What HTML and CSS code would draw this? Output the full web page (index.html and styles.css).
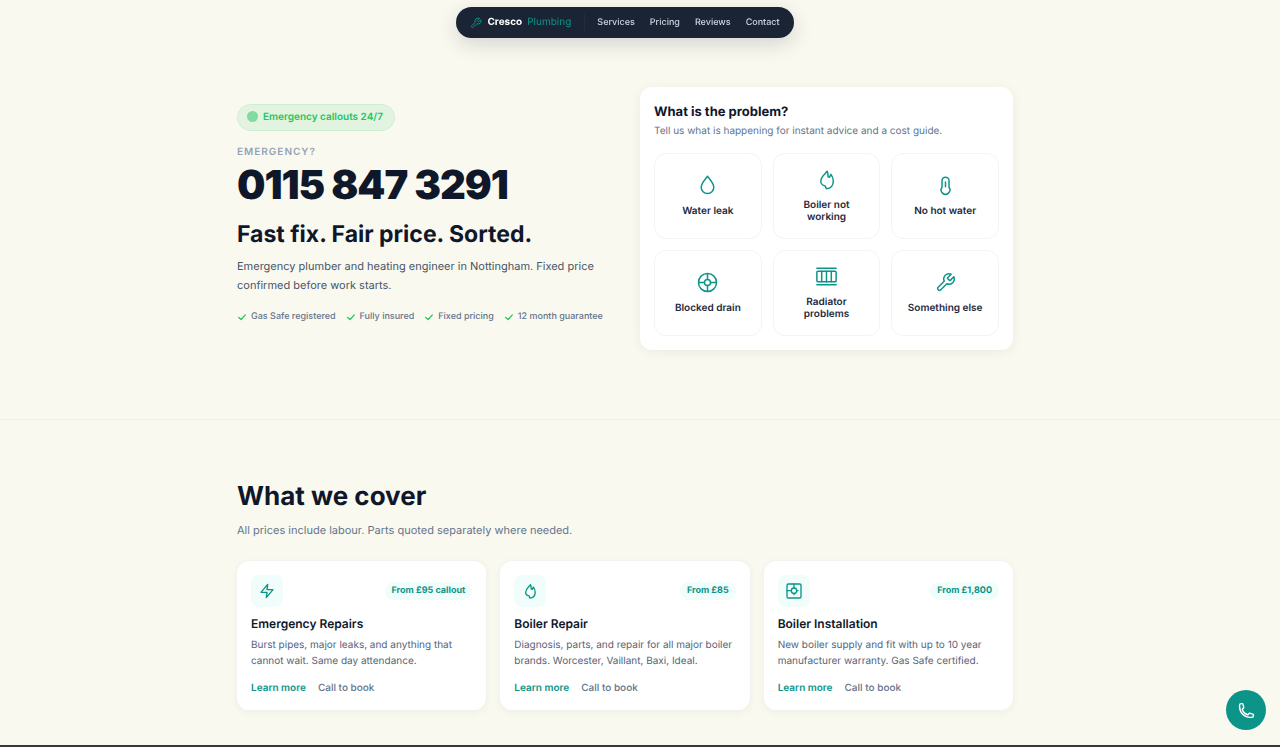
FILE: index.html
```
<!DOCTYPE html>
<html lang="en">
<head>
<meta charset="utf-8">
<meta name="viewport" content="width=device-width, initial-scale=1">
<title>Cresco Plumbing</title>
<link rel="stylesheet" href="styles.css">
</head>
<body>
<svg class="sprite" aria-hidden="true">
  <symbol id="wrench" viewBox="0 0 24 24"><path d="M14.7 6.3a1 1 0 0 0 0 1.4l1.6 1.6a1 1 0 0 0 1.4 0l3.77-3.77a6 6 0 0 1-7.94 7.94l-6.91 6.91a2.12 2.12 0 0 1-3-3l6.91-6.91a6 6 0 0 1 7.94-7.94z"/></symbol>
  <symbol id="check" viewBox="0 0 24 24"><path d="M20 7 10 18l-6-5"/></symbol>
  <symbol id="flame" viewBox="0 0 24 24"><path d="M12.800 2.500C10.500 6 5.500 8.500 5.500 14c0 2.500 2 5 5 5.300L11.800 22.500C17 22.500 19.800 18.800 19.800 13.800c0-3-1-5.400-2.700-7.700L15.300 9.500l-1.600-.8c.2-2-.1-4.200-.9-6.200z"/></symbol>
</svg>

<header class="header">
  <nav class="nav" aria-label="Main">
    <a class="brand" href="#top"><svg class="icon brand-icon"><use href="#wrench"/></svg><span class="brand-name">Cresco</span><span class="brand-sub">Plumbing</span></a>
    <ul class="nav-links">
      <li><a href="#services">Services</a></li>
      <li><a href="#pricing">Pricing</a></li>
      <li><a href="#reviews">Reviews</a></li>
      <li><a href="#contact">Contact</a></li>
    </ul>
  </nav>
</header>

<main id="top">
  <section class="hero">
    <div class="container hero-grid">
      <div class="intro">
        <p class="status"><span class="status-dot"></span>Emergency callouts 24/7</p>
        <p class="eyebrow">EMERGENCY?</p>
        <a class="phone" href="tel:01158473291">0115 847 3291</a>
        <h1 class="tagline">Fast fix. Fair price. Sorted.</h1>
        <p class="lead">Emergency plumber and heating engineer in Nottingham. Fixed price confirmed before work starts.</p>
        <ul class="trust">
          <li><svg class="icon check"><use href="#check"/></svg>Gas Safe registered</li>
          <li><svg class="icon check"><use href="#check"/></svg>Fully insured</li>
          <li><svg class="icon check"><use href="#check"/></svg>Fixed pricing</li>
          <li><svg class="icon check"><use href="#check"/></svg>12 month guarantee</li>
        </ul>
      </div>
      <div class="panel">
        <h2 class="panel-title">What is the problem?</h2>
        <p class="panel-text">Tell us what is happening for instant advice and a cost guide.</p>
        <div class="problems">
          <button class="problem" type="button"><svg class="icon problem-icon" viewBox="0 0 24 24"><path d="M12 1.500C9 5.500 4.800 9.500 4.800 14a7.200 7.200 0 0 0 14.400 0C19.200 9.500 15 5.500 12 1.500z"/></svg>Water leak</button>
          <button class="problem" type="button"><svg class="icon problem-icon"><use href="#flame"/></svg>Boiler not working</button>
          <button class="problem" type="button"><svg class="icon problem-icon" viewBox="0 0 24 24"><path d="M8 6.500a4 4 0 0 1 8 0V14a5 5 0 1 1-8 0z"/><path d="M12 8v5.500"/></svg>No hot water</button>
          <button class="problem" type="button"><svg class="icon problem-icon" viewBox="0 0 24 24"><circle cx="12" cy="12" r="10.300"/><circle cx="12" cy="12" r="3.500"/><path d="M12 2v6.500M12 15.500V22M2 12h6.500M15.500 12H22"/></svg>Blocked drain</button>
          <button class="problem" type="button"><svg class="icon problem-icon" viewBox="0 0 24 24"><path d="M1 2.500h22M1 21.500h22"/><rect x="1" y="6" width="22" height="12" rx="1"/><path d="M6.500 6v12M12 6v12M17.500 6v12"/></svg>Radiator problems</button>
          <button class="problem" type="button"><svg class="icon problem-icon"><use href="#wrench"/></svg>Something else</button>
        </div>
      </div>
    </div>
  </section>

  <section class="services" id="services">
    <div class="container">
      <h2 class="section-title">What we cover</h2>
      <p class="section-text">All prices include labour. Parts quoted separately where needed.</p>
      <div class="cards">
        <article class="card">
          <div class="card-top"><span class="tile"><svg class="icon tile-icon" viewBox="0 0 24 24"><path d="M13 2 3 14h9l-1 8 10-12h-9z"/></svg></span><span class="price">From £95 callout</span></div>
          <h3 class="card-title">Emergency Repairs</h3>
          <p class="card-text">Burst pipes, major leaks, and anything that cannot wait. Same day attendance.</p>
          <div class="card-links"><a class="more" href="#emergency">Learn more</a><a class="call" href="tel:01158473291">Call to book</a></div>
        </article>
        <article class="card">
          <div class="card-top"><span class="tile"><svg class="icon tile-icon"><use href="#flame"/></svg></span><span class="price">From £85</span></div>
          <h3 class="card-title">Boiler Repair</h3>
          <p class="card-text">Diagnosis, parts, and repair for all major boiler brands. Worcester, Vaillant, Baxi, Ideal.</p>
          <div class="card-links"><a class="more" href="#repair">Learn more</a><a class="call" href="tel:01158473291">Call to book</a></div>
        </article>
        <article class="card">
          <div class="card-top"><span class="tile"><svg class="icon tile-icon" viewBox="0 0 24 24"><rect x="1.500" y="1.500" width="21" height="21" rx="2"/><circle cx="12" cy="11.500" r="4"/><path d="M12 1.500v6M12 15.500v2M1.500 11.500H8M16 11.500h2"/></svg></span><span class="price">From £1,800</span></div>
          <h3 class="card-title">Boiler Installation</h3>
          <p class="card-text">New boiler supply and fit with up to 10 year manufacturer warranty. Gas Safe certified.</p>
          <div class="card-links"><a class="more" href="#installation">Learn more</a><a class="call" href="tel:01158473291">Call to book</a></div>
        </article>
      </div>
    </div>
  </section>
</main>
<footer class="footer"></footer>

<a class="fab" href="tel:01158473291" aria-label="Call us"><svg class="icon fab-icon" viewBox="0 0 24 24"><path d="M2.250 6.750c0 8.284 6.716 15 15 15h2.250a2.250 2.250 0 0 0 2.250-2.250v-1.372c0-.516-.351-.966-.852-1.091l-4.423-1.106c-.44-.11-.902.055-1.173.417l-.97 1.293c-.282.376-.769.542-1.210.380a12.035 12.035 0 0 1-7.143-7.143c-.162-.441.004-.928.380-1.210l1.293-.97c.363-.271.527-.734.417-1.173L6.963 3.102a1.125 1.125 0 0 0-1.091-.852H4.500A2.250 2.250 0 0 0 2.250 4.500v2.250z"/></svg></a>
</body>
</html>
```
FILE: styles.css
```
* { box-sizing: border-box; margin: 0; padding: 0; }

:root {
  --ink: #0f172a;
  --slate: #64748b;
  --teal: #0d9488;
  --gutter: 30px;
}

body {
  background: #faf9f0;
  color: var(--ink);
  font-family: Inter, "Liberation Sans", sans-serif;
  font-size: 12px;
  line-height: 16px;
  text-rendering: geometricPrecision;
}

a { color: inherit; text-decoration: none; }
ul { list-style: none; }

.sprite { display: none; }
.icon { flex: none; fill: none; stroke: currentColor; stroke-width: 2; stroke-linecap: round; stroke-linejoin: round; }

.header {
  position: fixed;
  inset: 7px var(--gutter) auto 0;
  display: flex;
  justify-content: center;
  z-index: 10;
}
.nav {
  display: flex;
  align-items: center;
  padding: 7px 14px;
  border-radius: 16px;
  background: #1a2434;
  box-shadow: 0 6px 20px rgba(15, 23, 42, 0.16);
}
.brand { display: flex; align-items: center; font-size: 10px; line-height: 17px; padding-right: 13px; border-right: 1px solid #222e40; }
.brand-icon { width: 12px; height: 12px; margin-right: 5px; color: var(--teal); }
.brand-name { color: #fff; font-weight: 700; margin-right: 5px; }
.brand-sub { color: var(--teal); }
.nav-links { display: flex; gap: 15px; padding-left: 12px; font-size: 9px; font-weight: 500; color: #cbd5e1; }

.container { width: 100%; max-width: 776px; margin: 0 auto; }

.hero { padding: 87px var(--gutter) 69px 0; border-bottom: 1px solid #eef0e8; }
.hero-grid { display: grid; grid-template-columns: 1fr 1fr; gap: 30px; align-items: center; }
.intro { padding-bottom: 9px; }

.status {
  display: flex;
  width: fit-content;
  align-items: center;
  gap: 5px;
  padding: 4px 11px 5px 9px;
  border: 1px solid #cdeed4;
  border-radius: 14px;
  background: #e2f4df;
  color: #22c55e;
  font-size: 10px;
  font-weight: 600;
}
.status-dot { width: 11px; height: 11px; border-radius: 50%; background: #82daa0; }
.eyebrow { margin-top: 13px; color: #94a3b8; font-size: 10px; font-weight: 600; letter-spacing: 1px; }
.phone { display: block; margin-top: 4px; font-size: 40px; line-height: 42px; font-weight: 900; letter-spacing: -1px; }
.tagline { margin-top: 12px; font-size: 23px; line-height: 32px; font-weight: 700; }
.lead { margin-top: 7px; color: #475569; font-size: 11px; line-height: 19px; }
.trust { display: flex; gap: 10px; margin-top: 14px; color: var(--slate); font-size: 9px; font-weight: 500; }
.trust li { display: flex; align-items: center; gap: 4px; white-space: nowrap; }
.check { width: 10px; height: 10px; color: #22c55e; stroke-width: 3; }

.panel {
  padding: 16px 14px 14px;
  border-radius: 12px;
  background: #fff;
  box-shadow: 0 2px 12px rgba(15, 23, 42, 0.06);
}
.panel-title { font-size: 13px; line-height: 18px; font-weight: 700; }
.panel-text { margin-top: 2px; color: var(--slate); font-size: 10px; }
.problems { display: grid; grid-template-columns: repeat(3, 1fr); gap: 11px; margin-top: 14px; }
.problem {
  display: flex;
  flex-direction: column;
  align-items: center;
  justify-content: center;
  gap: 9px;
  min-height: 86px;
  padding: 9px 13px 10px;
  border: 1px solid #f1f5f6;
  border-radius: 12px;
  background: #fff;
  color: #1e293b;
  font: 600 10px/12px Inter, "Liberation Sans", sans-serif;
  text-rendering: inherit;
  cursor: pointer;
}
.problem-icon { width: 21px; height: 21px; color: var(--teal); stroke-width: 1.7; }

.services { padding: 59px var(--gutter) 35px 0; }
.section-title { font-size: 26px; line-height: 36px; font-weight: 700; }
.section-text { margin-top: 7px; color: var(--slate); font-size: 11px; }
.cards { display: grid; grid-template-columns: repeat(3, 1fr); gap: 14px; margin-top: 23px; }
.card {
  padding: 14px;
  border-radius: 12px;
  background: #fff;
  box-shadow: 0 0 0 1px #f1f3ee, 0 2px 8px rgba(15, 23, 42, 0.05);
}
.card-top { display: flex; align-items: center; justify-content: space-between; }
.tile { display: grid; place-items: center; width: 32px; height: 32px; border-radius: 8px; background: #f0fdfa; }
.tile-icon { width: 16px; height: 16px; color: var(--teal); }
.price { padding: 1px 7px; border-radius: 9px; background: #f0fdfa; color: var(--teal); font-size: 9px; font-weight: 700; }
.card-title { margin-top: 9px; font-size: 12px; font-weight: 600; }
.card-text { margin-top: 5px; color: #55647a; font-size: 10px; }
.card-links { display: flex; gap: 12px; margin-top: 11px; font-size: 10px; }
.more { color: var(--teal); font-weight: 600; }
.call { color: var(--slate); font-weight: 500; }

.footer { height: 3px; background: #38383a; }

.fab {
  position: fixed;
  right: 14px;
  bottom: 17px;
  display: grid;
  place-items: center;
  width: 40px;
  height: 40px;
  border-radius: 50%;
  background: var(--teal);
  color: #fff;
}
.fab-icon { width: 17px; height: 17px; }
```
